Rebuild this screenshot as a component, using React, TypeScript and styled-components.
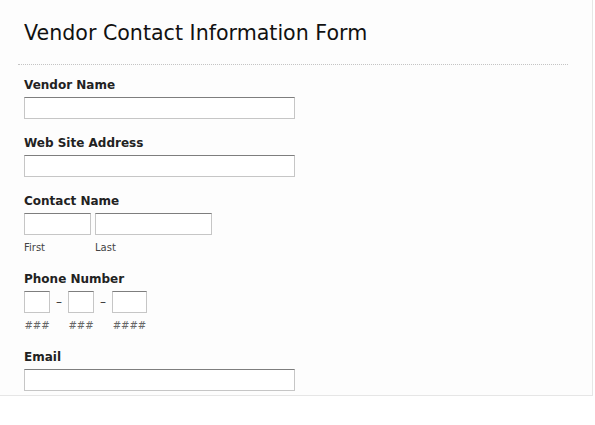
import styled, { createGlobalStyle } from "styled-components";

const GlobalStyle = createGlobalStyle`
    html, body {
        margin: 0;
        padding: 0;
        background: #ffffff;
    }
    body {
        font-family: "DejaVu Sans", "Liberation Sans", sans-serif;
        color: #222;
    }
`;

const App = () => {
    return <>
        <GlobalStyle />
        <Panel>
            <Header>
                <Title>Vendor Contact Information Form</Title>
            </Header>
            <Fields>
                <Field>
                    <Label>Vendor Name</Label>
                    <TextBox $width={271} />
                </Field>
                <Field>
                    <Label>Web Site Address</Label>
                    <TextBox $width={271} />
                </Field>
                <Field>
                    <Label>Contact Name</Label>
                    <Row>
                        <Part>
                            <TextBox $width={67} />
                            <SubLabel>First</SubLabel>
                        </Part>
                        <Part>
                            <TextBox $width={117} />
                            <SubLabel>Last</SubLabel>
                        </Part>
                    </Row>
                </Field>
                <Field>
                    <Label>Phone Number</Label>
                    <Row>
                        <Part $center>
                            <TextBox $width={26} />
                            <Hint>###</Hint>
                        </Part>
                        <Dash>–</Dash>
                        <Part $center>
                            <TextBox $width={26} />
                            <Hint>###</Hint>
                        </Part>
                        <Dash>–</Dash>
                        <Part $center>
                            <TextBox $width={35} />
                            <Hint>####</Hint>
                        </Part>
                    </Row>
                </Field>
                <Field $last>
                    <Label>Email</Label>
                    <TextBox $width={271} />
                </Field>
            </Fields>
        </Panel>
    </>
}

export default App;

const Panel = styled.div`
    width: 550px;
    padding: 0 24px 4px 18px;
    background: #fdfdfd;
    border-right: 1px solid #e6e6e6;
    border-bottom: 1px solid #e6e6e6;
    box-sizing: content-box;
`;

const Header = styled.div`
    padding: 21px 6px 19px;
    border-bottom: 1px dotted #c4c4c4;
`;

const Title = styled.h1`
    margin: 0;
    font-size: 20.6px;
    line-height: 24px;
    font-weight: normal;
    color: #111;
`;

const Fields = styled.div`
    padding: 11px 6px 0;
    display: flex;
    flex-direction: column;
`;

const Field = styled.div<{ $last?: boolean }>`
    display: flex;
    flex-direction: column;
    align-items: flex-start;
    margin-bottom: ${p => p.$last ? 0 : 15}px;
`;

const Label = styled.label`
    padding-top: 1px;
    font-size: 12px;
    line-height: 16px;
    font-weight: bold;
    color: #222;
    margin-bottom: 4px;
`;

const TextBox = styled.input.attrs({ type: "text" }) <{ $width: number }>`
    width: ${p => p.$width}px;
    height: 22px;
    box-sizing: border-box;
    margin: 0;
    padding: 2px 4px;
    background: #fff;
    border: 1px solid #c6c6c6;
    border-top-color: #7e7e7e;
    border-radius: 0;
    font-family: inherit;
    font-size: 12px;
    outline: none;
`;

const Row = styled.div`
    display: flex;
    align-items: flex-start;
    gap: 4px;
`;

const Part = styled.div<{ $center?: boolean }>`
    display: flex;
    flex-direction: column;
    align-items: ${p => p.$center ? "center" : "flex-start"};
`;

const SubLabel = styled.span`
    margin-top: 6px;
    font-size: 10px;
    line-height: 14px;
    color: #444;
`;

const Hint = styled.span`
    margin-top: 6px;
    font-size: 10px;
    line-height: 14px;
    font-style: italic;
    color: #666;
`;

const Dash = styled.span`
    width: 10px;
    text-align: center;
    font-size: 12px;
    line-height: 22px;
    color: #333;
`;
